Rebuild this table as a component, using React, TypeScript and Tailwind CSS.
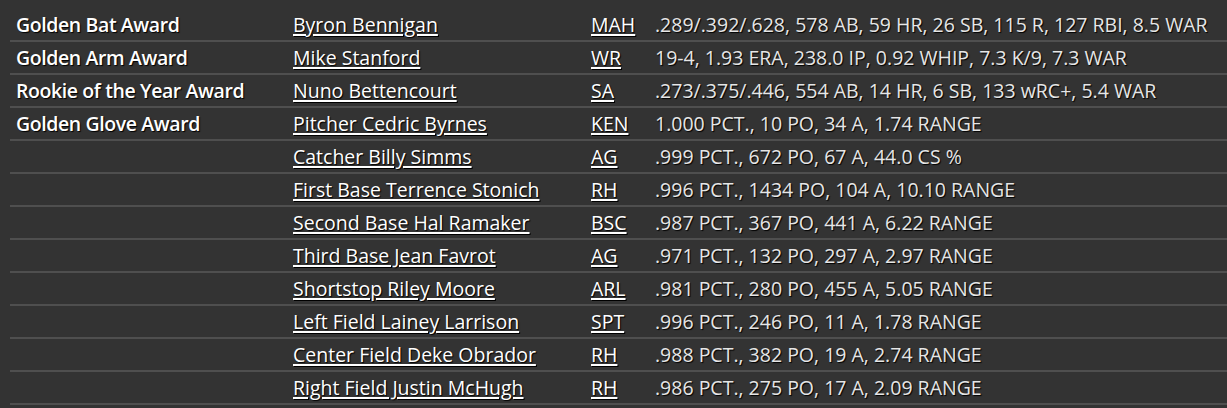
import React from 'react';

type Row = { award?: string; player: string; team: string; stats: string };

const ROWS: Row[] = [
  { award: 'Golden Bat Award', player: 'Byron Bennigan', team: 'MAH', stats: '.289/.392/.628, 578 AB, 59 HR, 26 SB, 115 R, 127 RBI, 8.5 WAR' },
  { award: 'Golden Arm Award', player: 'Mike Stanford', team: 'WR', stats: '19-4, 1.93 ERA, 238.0 IP, 0.92 WHIP, 7.3 K/9, 7.3 WAR' },
  { award: 'Rookie of the Year Award', player: 'Nuno Bettencourt', team: 'SA', stats: '.273/.375/.446, 554 AB, 14 HR, 6 SB, 133 wRC+, 5.4 WAR' },
  { award: 'Golden Glove Award', player: 'Pitcher Cedric Byrnes', team: 'KEN', stats: '1.000 PCT., 10 PO, 34 A, 1.74 RANGE' },
  { player: 'Catcher Billy Simms', team: 'AG', stats: '.999 PCT., 672 PO, 67 A, 44.0 CS %' },
  { player: 'First Base Terrence Stonich', team: 'RH', stats: '.996 PCT., 1434 PO, 104 A, 10.10 RANGE' },
  { player: 'Second Base Hal Ramaker', team: 'BSC', stats: '.987 PCT., 367 PO, 441 A, 6.22 RANGE' },
  { player: 'Third Base Jean Favrot', team: 'AG', stats: '.971 PCT., 132 PO, 297 A, 2.97 RANGE' },
  { player: 'Shortstop Riley Moore', team: 'ARL', stats: '.981 PCT., 280 PO, 455 A, 5.05 RANGE' },
  { player: 'Left Field Lainey Larrison', team: 'SPT', stats: '.996 PCT., 246 PO, 11 A, 1.78 RANGE' },
  { player: 'Center Field Deke Obrador', team: 'RH', stats: '.988 PCT., 382 PO, 19 A, 2.74 RANGE' },
  { player: 'Right Field Justin McHugh', team: 'RH', stats: '.986 PCT., 275 PO, 17 A, 2.09 RANGE' },
];

const App: React.FC = () => {
  return (
    <div
      className="bg-[#333333] w-[1227px] h-[408px] overflow-hidden pl-[10px] pt-[8px] text-[19.5px] leading-[31px] text-[#eeeeee] [text-shadow:1px_1px_1px_#000]"
      style={{ fontFamily: '"Open Sans", "Liberation Sans", sans-serif' }}
    >
      <table className="w-full border-collapse text-left">
        <tbody>
          {ROWS.map((r, i) => (
            <tr key={i} className="h-[33px] border-b-2 border-[#4f4f4f]">
              <td className="w-[277px] pl-[6px] font-semibold tracking-[-0.4px] text-white whitespace-nowrap">{r.award ?? ''}</td>
              <td className="w-[298px] pl-[6px] whitespace-nowrap">
                <a className="underline underline-offset-[2px] decoration-[1.5px] text-white cursor-pointer">{r.player}</a>
              </td>
              <td className="w-[64px] pl-[6px]">
                <a className="underline underline-offset-[2px] decoration-[1.5px] text-white cursor-pointer">{r.team}</a>
              </td>
              <td className="pl-[6px] text-[#e6e6e6] whitespace-nowrap">{r.stats}</td>
            </tr>
          ))}
        </tbody>
      </table>
    </div>
  );
};

export default App;
